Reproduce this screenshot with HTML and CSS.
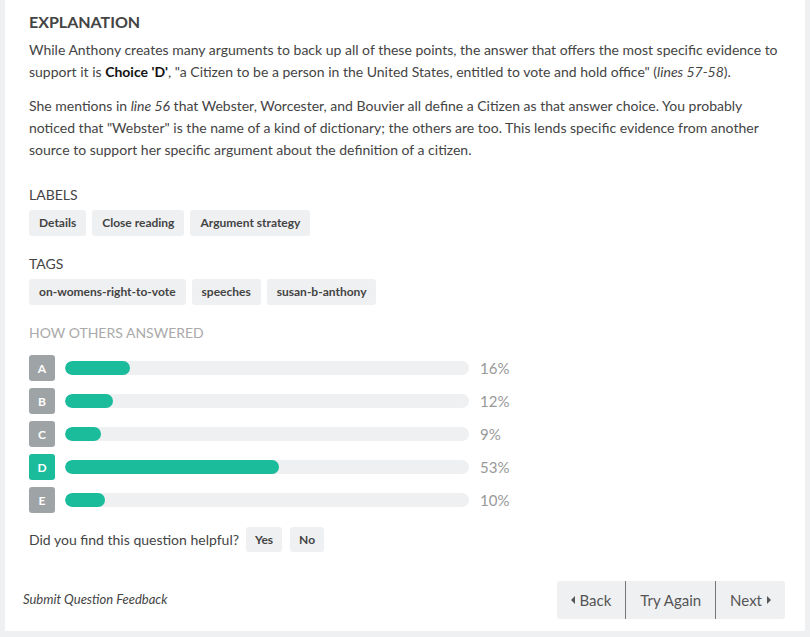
FILE: index.html
```html
<!DOCTYPE html>
<html>
<head>
<meta charset="utf-8">
<link rel="stylesheet" href="styles.css">
</head>
<body>
<div class="card">
  <div class="content">
    <h2 class="title">EXPLANATION</h2>
    <p class="para">While Anthony creates many arguments to back up all of these points, the answer that offers the most specific evidence to support it is <b>Choice 'D'</b>, "a Citizen to be a person in the United States, entitled to vote and hold office" (<i>lines 57-58</i>).</p>
    <p class="para">She mentions in <i>line 56</i> that Webster, Worcester, and Bouvier all define a Citizen as that answer choice. You probably noticed that "Webster" is the name of a kind of dictionary; the others are too. This lends specific evidence from another source to support her specific argument about the definition of a citizen.</p>

    <div class="section-label first">LABELS</div>
    <div class="chips">
      <span class="chip">Details</span>
      <span class="chip">Close reading</span>
      <span class="chip">Argument strategy</span>
    </div>

    <div class="section-label">TAGS</div>
    <div class="chips">
      <span class="chip">on-womens-right-to-vote</span>
      <span class="chip">speeches</span>
      <span class="chip">susan-b-anthony</span>
    </div>

    <div class="section-label muted">HOW OTHERS ANSWERED</div>
    <div class="stats">
      <div class="row"><span class="letter">A</span><div class="track"><div class="fill" style="width:16%"></div></div><span class="pct">16%</span></div>
      <div class="row"><span class="letter">B</span><div class="track"><div class="fill" style="width:12%"></div></div><span class="pct">12%</span></div>
      <div class="row"><span class="letter">C</span><div class="track"><div class="fill" style="width:9%"></div></div><span class="pct">9%</span></div>
      <div class="row"><span class="letter correct">D</span><div class="track"><div class="fill" style="width:53%"></div></div><span class="pct">53%</span></div>
      <div class="row"><span class="letter">E</span><div class="track"><div class="fill" style="width:10%"></div></div><span class="pct">10%</span></div>
    </div>

    <div class="helpful">
      <span class="question">Did you find this question helpful?</span>
      <button class="small-btn">Yes</button>
      <button class="small-btn">No</button>
    </div>
  </div>

  <div class="footer">
    <a class="feedback">Submit Question Feedback</a>
    <div class="nav">
      <button class="nav-btn"><span class="tri left"></span>Back</button>
      <button class="nav-btn">Try Again</button>
      <button class="nav-btn">Next<span class="tri right"></span></button>
    </div>
  </div>
</div>
</body>
</html>
```
FILE: styles.css
```css
html, body {
  margin: 0;
  padding: 0;
  background: #eff0f2;
}
body {
  font-family: Lato, "Open Sans", sans-serif;
  color: #444;
}
.card {
  background: #fff;
  margin: 0 5px;
  width: 800px;
  height: 631px;
  box-sizing: border-box;
  display: flex;
  flex-direction: column;
}
.content {
  padding: 12px 24px 0 24px;
}
.title {
  margin: 0 0 7px 0;
  font-size: 16px;
  line-height: 20px;
  font-weight: 700;
  color: #444;
}
.para {
  margin: 0 0 12px 0;
  font-size: 14px;
  line-height: 22px;
  color: #444;
}
.para b {
  color: #111;
  font-weight: 700;
}
.section-label {
  font-size: 14px;
  line-height: 20px;
  margin-top: 18px;
  margin-bottom: 5px;
  color: #444;
}
.section-label.first {
  margin-top: 24px;
}
.section-label.muted {
  color: #aaa;
  margin-bottom: 12px;
}
.chips {
  display: flex;
  gap: 6px;
}
.chip {
  background: #eff0f2;
  border-radius: 3px;
  font-size: 12px;
  font-weight: 700;
  line-height: 16px;
  padding: 5px 10px;
  color: #444;
}
.stats {
  display: flex;
  flex-direction: column;
  gap: 7px;
}
.row {
  display: flex;
  align-items: center;
  height: 26px;
}
.letter {
  width: 26px;
  height: 26px;
  border-radius: 3px;
  background: #9ea3a6;
  color: #fff;
  font-size: 12px;
  font-weight: 700;
  display: flex;
  align-items: center;
  justify-content: center;
}
.letter.correct {
  background: #1abc9c;
}
.track {
  margin-left: 10px;
  width: 404px;
  height: 14px;
  border-radius: 7px;
  background: #eff0f2;
  overflow: hidden;
}
.fill {
  height: 100%;
  border-radius: 7px;
  background: #1abc9c;
}
.pct {
  margin-left: 11px;
  font-size: 15px;
  color: #999;
}
.helpful {
  margin-top: 14px;
  display: flex;
  align-items: center;
  font-size: 14px;
  color: #444;
}
.question {
  margin-right: 7px;
}
.small-btn {
  font-family: Lato, sans-serif;
  background: #eff0f2;
  border: none;
  border-radius: 3px;
  font-size: 12px;
  font-weight: 700;
  color: #444;
  height: 25px;
  padding: 0 9px;
  margin-right: 8px;
}
.footer {
  margin-top: 29px;
  padding: 0 20px 0 18px;
  display: flex;
  align-items: center;
  justify-content: space-between;
}
.feedback {
  font-style: italic;
  font-size: 13px;
  line-height: 16px;
  margin-top: -2px;
  color: #444;
}
.nav {
  display: flex;
  background: #eff0f2;
  border-radius: 3px;
  height: 38px;
}
.nav-btn {
  font-family: Lato, sans-serif;
  background: transparent;
  border: none;
  font-size: 15px;
  color: #555;
  padding: 0 14px;
  display: flex;
  align-items: center;
  gap: 5px;
}
.nav-btn + .nav-btn {
  border-left: 1px solid #777;
}
.tri {
  display: inline-block;
  width: 0;
  height: 0;
  border-top: 4px solid transparent;
  border-bottom: 4px solid transparent;
}
.tri.left {
  border-right: 4px solid #555;
}
.tri.right {
  border-left: 4px solid #555;
}
```
